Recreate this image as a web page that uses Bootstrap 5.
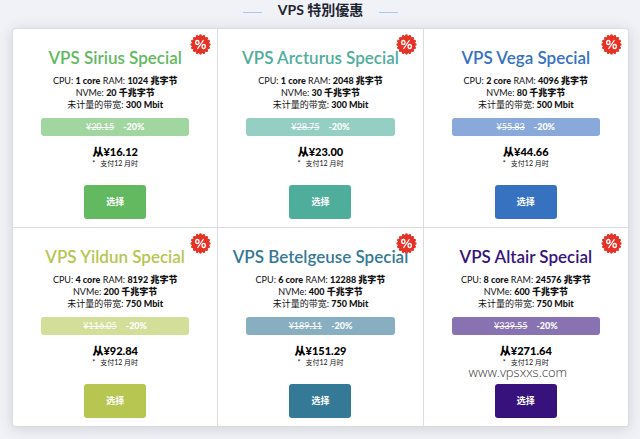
<!DOCTYPE html>
<html lang="zh">
<head>
<meta charset="utf-8">
<meta name="viewport" content="width=device-width, initial-scale=1">
<title>VPS 特別優惠</title>
<link rel="stylesheet" href="https://cdn.jsdelivr.net/npm/bootstrap@5.3.0/dist/css/bootstrap.min.css">
<style>
body { background: #f1f2f7; color: #111; font-family: Lato, "Noto Sans CJK SC", sans-serif; font-size: 9px; line-height: 12px; }
.page { padding: 0 11px 12px 12px; }
.heading { font-size: 14px; line-height: 20px; font-weight: 700; font-family: Lato, "Noto Sans CJK TC", sans-serif; color: #1c2430; margin-bottom: 8px; gap: 16px; }
.rule { width: 19px; height: 1px; background: #a9c8ec; margin-top: 5px; }
.plans { border: 1px solid #dcdcde; border-radius: 3px; background: #dcdcde; gap: 1px; display: grid; grid-template-columns: repeat(3, 1fr); box-shadow: 0 2px 14px rgba(40, 50, 70, .16); overflow: hidden; }
.plan { background: #fff; padding: 19px 28px 8px; }
.plan h2 { color: var(--tone); font-size: 17px; line-height: 20px; font-weight: 600; margin: 0 -28px 7px; white-space: nowrap; }
.specs { margin: 0 -20px 7px; }
.plan b { font-weight: 900; }
.off { background: var(--soft); color: #fff; border-radius: 3px; height: 18px; gap: 9px; }
.price { font-size: 11px; line-height: 14px; font-weight: 900; margin: 9px 0 0; color: #000; }
.note { font-size: 7px; line-height: 8px; margin-bottom: 18px; gap: 5px; }
.plan .btn { background: var(--tone); color: #fff; font-size: 9px; line-height: 12px; font-weight: 700; border: 0; border-radius: 3px; width: 62px; height: 34px; padding: 0; }
.deal { position: absolute; top: 5px; right: 6px; width: 21px; height: 21px; }
.site { position: absolute; left: 0; right: 16px; bottom: 46px; font-family: "Open Sans", sans-serif; font-weight: 300; font-size: 13px; line-height: 16px; color: #333; }
</style>
</head>
<body>
<svg width="0" height="0" class="position-absolute" aria-hidden="true">
  <symbol id="deal" viewBox="0 0 42 42">
    <circle cx="21" cy="21" r="18" fill="#e63225"/>
    <circle cx="21" cy="21" r="17.6" fill="none" stroke="#e63225" stroke-width="5.4" stroke-linecap="round" pathLength="32" stroke-dasharray="0 2"/>
    <g fill="none" stroke="#fff" stroke-width="2.6" stroke-linecap="round">
      <ellipse cx="14.6" cy="17" rx="3.3" ry="4"/>
      <ellipse cx="27.4" cy="25" rx="3.3" ry="4"/>
      <path d="M26.5 13 L15.5 29"/>
    </g>
  </symbol>
</svg>
<main class="page">
  <h1 class="heading d-flex justify-content-center align-items-center"><span class="rule"></span>VPS 特別優惠<span class="rule"></span></h1>
  <section class="plans text-center">
    <article class="plan position-relative" style="--tone:#62b95f;--soft:#a1d6a0">
      <h2>VPS Sirius Special</h2>
      <p class="specs">CPU: <b>1 core</b> RAM: <b>1024 兆字节</b><br>NVMe: <b>20 千兆字节</b><br>未计量的带宽: <b>300 Mbit</b></p>
      <div class="off d-flex justify-content-center align-items-center"><s>¥20.15</s><b>-20%</b></div>
      <p class="price">从¥16.12</p>
      <p class="note d-flex justify-content-center"><span>*</span><span>支付12 月时</span></p>
      <button type="button" class="btn">选择</button>
      <svg class="deal" aria-hidden="true"><use href="#deal"/></svg>
    </article>
    <article class="plan position-relative" style="--tone:#4fad9b;--soft:#95cec3">
      <h2>VPS Arcturus Special</h2>
      <p class="specs">CPU: <b>1 core</b> RAM: <b>2048 兆字节</b><br>NVMe: <b>30 千兆字节</b><br>未计量的带宽: <b>300 Mbit</b></p>
      <div class="off d-flex justify-content-center align-items-center"><s>¥28.75</s><b>-20%</b></div>
      <p class="price">从¥23.00</p>
      <p class="note d-flex justify-content-center"><span>*</span><span>支付12 月时</span></p>
      <button type="button" class="btn">选择</button>
      <svg class="deal" aria-hidden="true"><use href="#deal"/></svg>
    </article>
    <article class="plan position-relative" style="--tone:#3672c0;--soft:#88a9da">
      <h2>VPS Vega Special</h2>
      <p class="specs">CPU: <b>2 core</b> RAM: <b>4096 兆字节</b><br>NVMe: <b>80 千兆字节</b><br>未计量的带宽: <b>500 Mbit</b></p>
      <div class="off d-flex justify-content-center align-items-center"><s>¥55.83</s><b>-20%</b></div>
      <p class="price">从¥44.66</p>
      <p class="note d-flex justify-content-center"><span>*</span><span>支付12 月时</span></p>
      <button type="button" class="btn">选择</button>
      <svg class="deal" aria-hidden="true"><use href="#deal"/></svg>
    </article>
    <article class="plan position-relative" style="--tone:#b6c650;--soft:#d3de98">
      <h2>VPS Yildun Special</h2>
      <p class="specs">CPU: <b>4 core</b> RAM: <b>8192 兆字节</b><br>NVMe: <b>200 千兆字节</b><br>未计量的带宽: <b>750 Mbit</b></p>
      <div class="off d-flex justify-content-center align-items-center"><s>¥116.05</s><b>-20%</b></div>
      <p class="price">从¥92.84</p>
      <p class="note d-flex justify-content-center"><span>*</span><span>支付12 月时</span></p>
      <button type="button" class="btn">选择</button>
      <svg class="deal" aria-hidden="true"><use href="#deal"/></svg>
    </article>
    <article class="plan position-relative" style="--tone:#347996;--soft:#88aec1">
      <h2>VPS Betelgeuse Special</h2>
      <p class="specs">CPU: <b>6 core</b> RAM: <b>12288 兆字节</b><br>NVMe: <b>400 千兆字节</b><br>未计量的带宽: <b>750 Mbit</b></p>
      <div class="off d-flex justify-content-center align-items-center"><s>¥189.11</s><b>-20%</b></div>
      <p class="price">从¥151.29</p>
      <p class="note d-flex justify-content-center"><span>*</span><span>支付12 月时</span></p>
      <button type="button" class="btn">选择</button>
      <svg class="deal" aria-hidden="true"><use href="#deal"/></svg>
    </article>
    <article class="plan position-relative" style="--tone:#37127c;--soft:#8872b2">
      <h2>VPS Altair Special</h2>
      <p class="specs">CPU: <b>8 core</b> RAM: <b>24576 兆字节</b><br>NVMe: <b>600 千兆字节</b><br>未计量的带宽: <b>750 Mbit</b></p>
      <div class="off d-flex justify-content-center align-items-center"><s>¥339.55</s><b>-20%</b></div>
      <p class="price">从¥271.64</p>
      <p class="note d-flex justify-content-center"><span>*</span><span>支付12 月时</span></p>
      <button type="button" class="btn">选择</button>
      <svg class="deal" aria-hidden="true"><use href="#deal"/></svg>
      <span class="site">www.vpsxxs.com</span>
    </article>
  </section>
</main>
<script src="https://cdn.jsdelivr.net/npm/bootstrap@5.3.0/dist/js/bootstrap.bundle.min.js"></script>
</body>
</html>
